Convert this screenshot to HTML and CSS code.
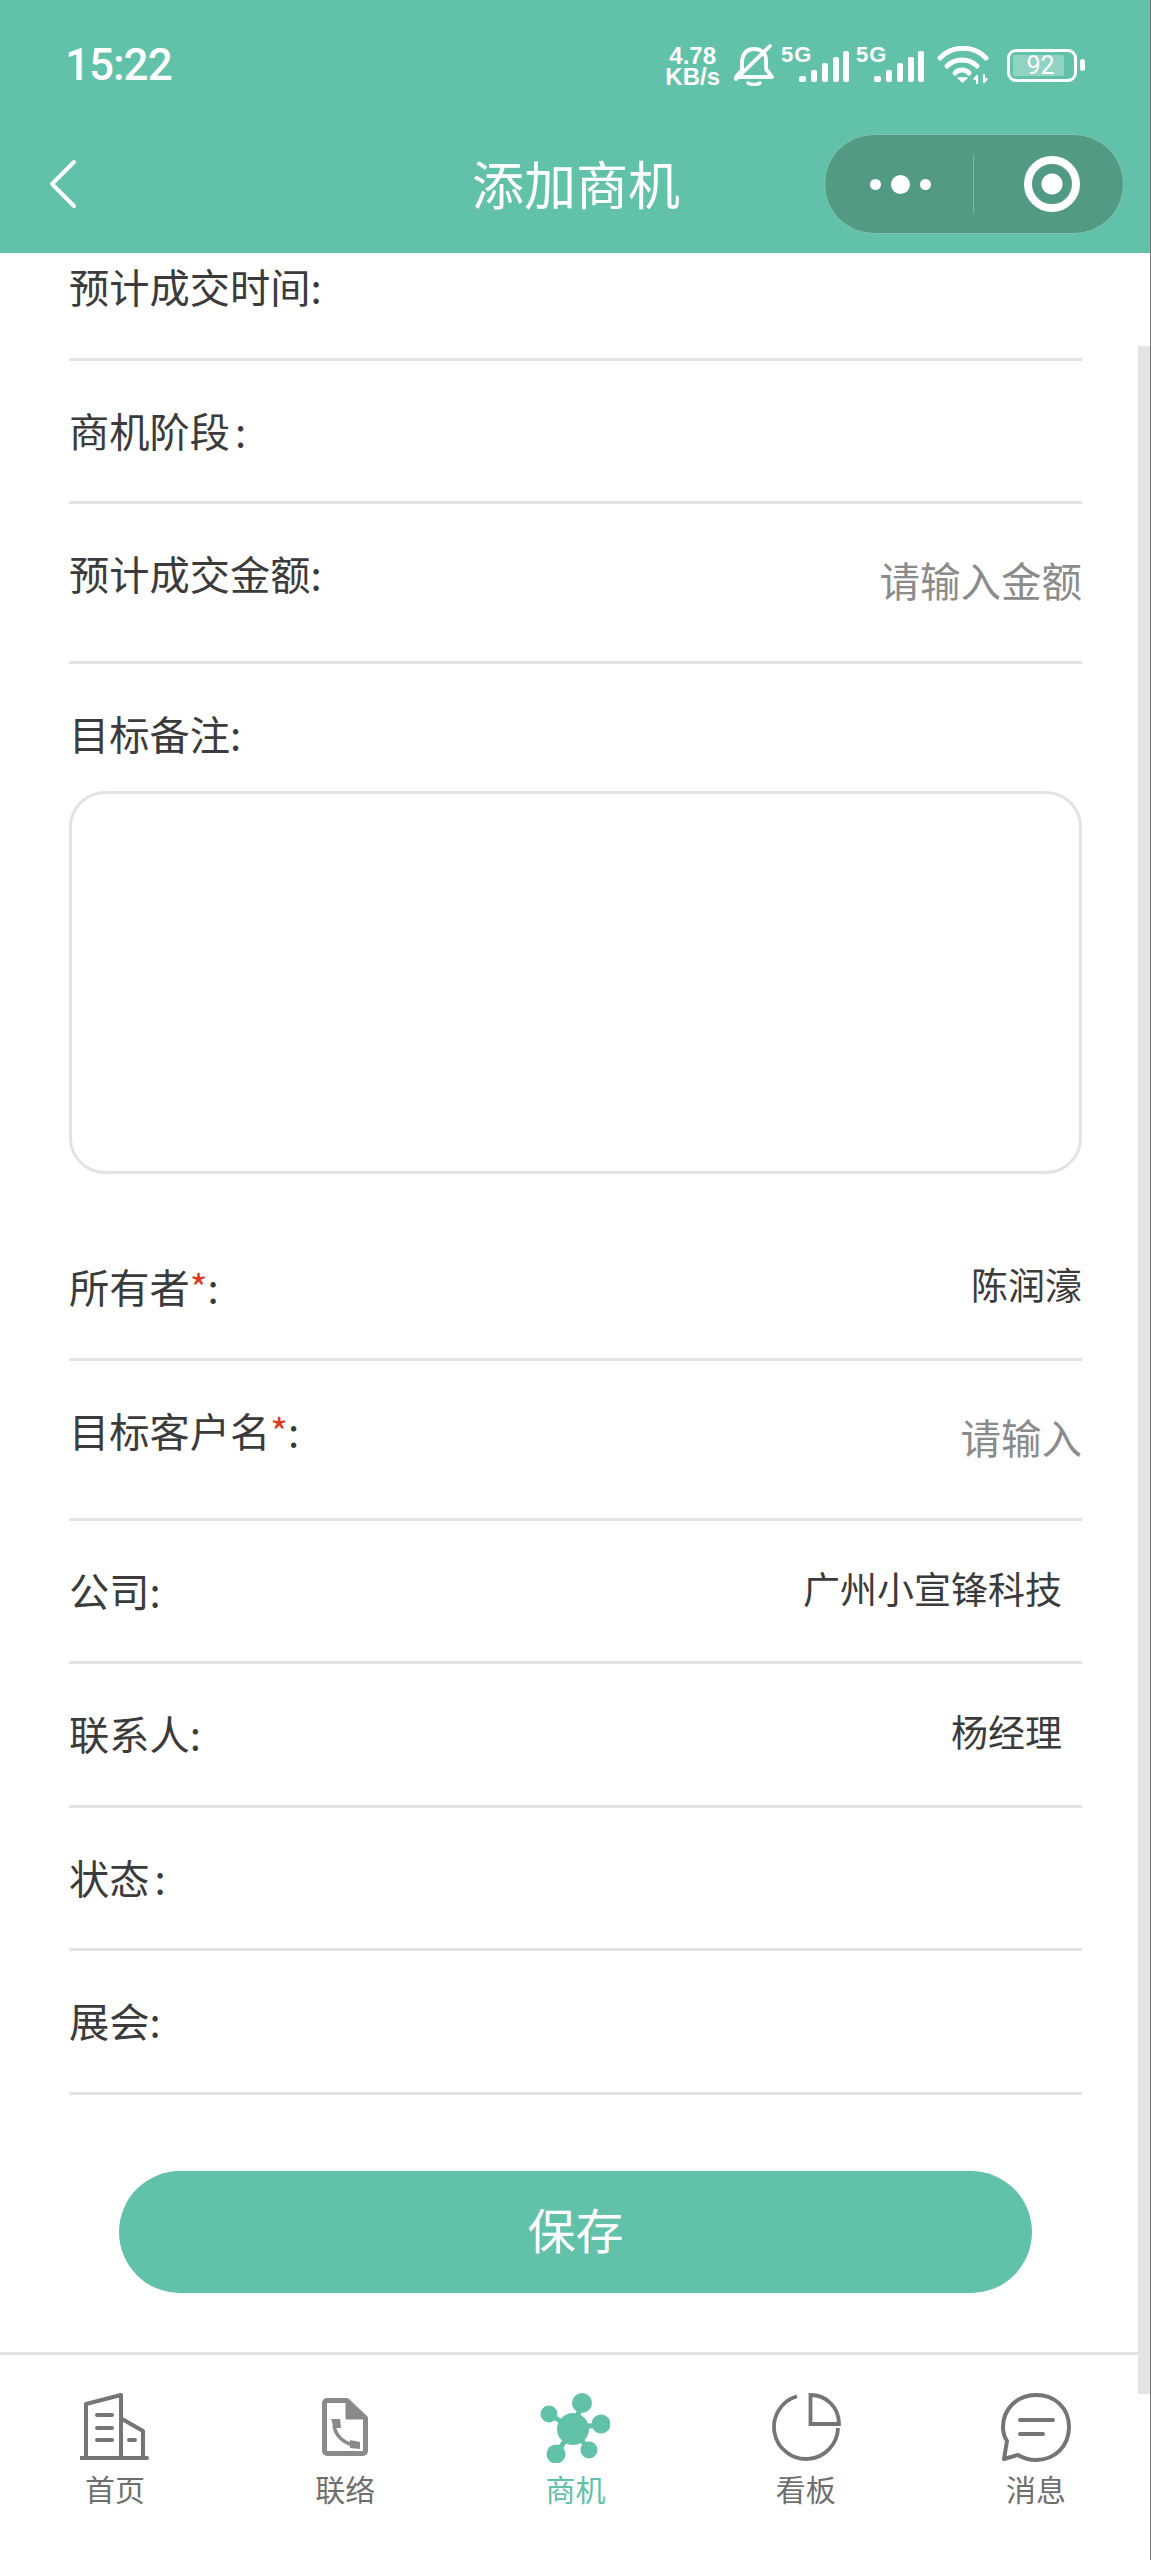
FILE: index.html
```html
<!DOCTYPE html>
<html lang="zh-CN">
<head>
  <meta charset="UTF-8" />
  <meta name="viewport" content="width=device-width, initial-scale=1.0" />
  <title>添加商机</title>
  <link rel="stylesheet" href="styles.css">
</head>
<body>
  <div class="page">
    <header class="top">
      <div class="status">
        <span class="time">15:22</span>
        <div class="status-icons">
          <span class="speed">4.78<br>KB/s</span>
          <svg class="bell" width="40" height="42" viewBox="0 0 40 42" fill="none" stroke="#fff" stroke-width="3.8" stroke-linecap="round" stroke-linejoin="round">
            <path d="M2 33h36l-6-8V16C32 9 27 5 20 5S9 9 8 17v9z"/>
            <path d="M14 39c3 2 9 2 12 0" stroke-width="3.4"/>
            <path d="M2 35 36 2"/>
          </svg>
          <div class="sig">
            <span class="five-g">5G</span>
            <svg width="68" height="37" viewBox="0 0 68 37" fill="#fff">
              <rect x="18" y="26" width="7" height="6" rx="2"/>
              <rect x="30" y="20" width="6" height="12" rx="2"/>
              <rect x="41" y="13" width="6" height="19" rx="2"/>
              <rect x="52" y="7" width="6" height="25" rx="2"/>
              <rect x="62" y="1" width="6" height="31" rx="2"/>
            </svg>
          </div>
          <div class="sig">
            <span class="five-g">5G</span>
            <svg width="68" height="37" viewBox="0 0 68 37" fill="#fff">
              <rect x="18" y="26" width="7" height="6" rx="2"/>
              <rect x="30" y="20" width="6" height="12" rx="2"/>
              <rect x="41" y="13" width="6" height="19" rx="2"/>
              <rect x="52" y="7" width="6" height="25" rx="2"/>
              <rect x="62" y="1" width="6" height="31" rx="2"/>
            </svg>
          </div>
          <svg class="wifi" width="52" height="38" viewBox="0 0 52 38" fill="none" stroke="#fff" stroke-width="5" stroke-linecap="round">
            <path d="M3 12C15 -1 37 -1 49 12"/>
            <path d="M10 20c8-8 22-8 30 0"/>
            <path d="M18 27c4-4 10-4 14 0" />
            <path d="M21 32h9l-4.500 4z" fill="#fff" stroke-width="1.500" stroke-linejoin="round"/>
            <path d="M40 30v7M37.500 33l2.500-3M47 29v7M47 36l2.500-3" stroke-width="2.200"/>
          </svg>
          <div class="battery">
            <div class="battery-body"><span class="battery-num">92</span></div>
            <span class="battery-nub"></span>
          </div>
        </div>
      </div>
      <nav class="nav">
        <svg class="back" width="28" height="50" viewBox="0 0 28 50" fill="none" stroke="#fff" stroke-width="4" stroke-linecap="round" stroke-linejoin="round">
          <path d="M25 3 3 25l22 22"/>
        </svg>
        <h1 class="title">添加商机</h1>
        <div class="capsule">
          <div class="cap-dots"><i class="dot"></i><i class="dot big"></i><i class="dot"></i></div>
          <span class="cap-line"></span>
          <div class="cap-target"><i class="target-core"></i></div>
        </div>
      </nav>
    </header>

    <main class="content">
      <div class="form">
        <div class="row"><span class="label">预计成交时间:</span></div>
        <div class="row"><span class="label">商机阶段 :</span></div>
        <div class="row tall"><span class="label">预计成交金额:</span><span class="hint">请输入金额</span></div>
        <div class="note">
          <span class="label">目标备注:</span>
          <div class="note-box"></div>
        </div>
        <div class="row"><span class="label">所有者<em class="req">*</em>:</span><span class="value">陈润濠</span></div>
        <div class="row tall"><span class="label">目标客户名<em class="req">*</em>:</span><span class="hint">请输入</span></div>
        <div class="row"><span class="label">公司:</span><span class="value arrow-gap">广州小宣锋科技</span></div>
        <div class="row"><span class="label">联系人:</span><span class="value arrow-gap">杨经理</span></div>
        <div class="row"><span class="label">状态 :</span></div>
        <div class="row"><span class="label">展会:</span></div>
        <button class="save">保存</button>
      </div>
    </main>

    <footer class="tabs">
      <div class="tab">
        <svg class="tab-icon" width="70" height="70" viewBox="0 0 70 70" fill="none" stroke="#757575" stroke-width="4" stroke-linecap="round" stroke-linejoin="round">
          <path d="M1 65h66"/>
          <path d="M6 65V11L41 2v63"/>
          <path d="M42 26 63 38v27"/>
          <path d="M17 22h15M17 35h15M17 47h15M49 47h6"/>
        </svg>
        <span>首页</span>
      </div>
      <div class="tab">
        <svg class="tab-icon" width="70" height="70" viewBox="0 0 70 70" fill="none">
          <path d="M17 7.500h20L55.500 25v33a2.500 2.500 0 0 1-2.500 2.500H17a2.500 2.500 0 0 1-2.500-2.500V10a2.500 2.500 0 0 1 2.500-2.500z" stroke="#8a8a8a" stroke-width="5" stroke-linejoin="round"/>
          <path d="M37 7.500V25h18.500z" fill="#8a8a8a" stroke="#8a8a8a" stroke-width="3" stroke-linejoin="round"/>
          <path d="M24 32c1 10 9 18 20 20" stroke="#8a8a8a" stroke-width="3.500"/>
          <path d="M21 26h9l1 9h-7zM40 47l10 2v7l-10-1z" fill="#8a8a8a"/>
        </svg>
        <span>联络</span>
      </div>
      <div class="tab active">
        <svg class="tab-icon" width="70" height="70" viewBox="0 0 70 70" fill="#62c1a9" stroke="#62c1a9" stroke-width="5">
          <path d="M33 36 42 10M33 36 9 21M33 36 61 31M33 36 49 57M33 36 16 61"/>
          <circle cx="33" cy="36" r="16" stroke="none"/>
          <circle cx="42" cy="10" r="10" stroke="none"/>
          <circle cx="9" cy="21" r="8.500" stroke="none"/>
          <circle cx="61" cy="31" r="9.500" stroke="none"/>
          <circle cx="49" cy="57" r="8.500" stroke="none"/>
          <circle cx="16" cy="61" r="9.500" stroke="none"/>
        </svg>
        <span>商机</span>
      </div>
      <div class="tab">
        <svg class="tab-icon" width="70" height="70" viewBox="0 0 70 70" fill="none" stroke="#757575" stroke-width="3.800">
          <path d="M26 3.300A32 32 0 1 0 67 35"/>
          <path d="M39.500 2v29H68C68 15 56 2 39.500 2z"/>
        </svg>
        <span>看板</span>
      </div>
      <div class="tab">
        <svg class="tab-icon" width="70" height="70" viewBox="0 0 70 70" fill="none" stroke="#757575" stroke-width="4" stroke-linecap="round" stroke-linejoin="round">
          <path d="M35 2C16 2 2 16 2 34c0 6 2 11 4 14L3 66l14-4c5 3 11 5 18 5 19 0 33-14 33-33S54 2 35 2z"/>
          <path d="M19 27h33M19 41h23"/>
        </svg>
        <span>消息</span>
      </div>
    </footer>
    <div class="scrollbar"></div>
    <div class="edge"></div>
  </div>
</body>
</html>
```

FILE: styles.css
```css
* {
  box-sizing: border-box;
}
html, body {
  margin: 0;
  padding: 0;
  background: #fff;
}
.page {
  position: relative;
  width: 1151px;
  height: 2560px;
  display: flex;
  flex-direction: column;
  overflow: hidden;
  font-family: "Noto Sans CJK SC", "Noto Sans", sans-serif;
  color: #3b3b3b;
}

/* header */
.top {
  height: 253px;
  background: #62c1a9;
  color: #fff;
  flex: none;
}
.status {
  height: 115px;
  padding: 15px 66px 0 65px;
  display: flex;
  align-items: center;
  justify-content: space-between;
}
.time {
  font-family: Roboto, sans-serif;
  font-size: 44px;
  font-weight: 500;
  letter-spacing: -1px;
}
.status-icons {
  display: flex;
  align-items: center;
}
.speed {
  font-family: "Liberation Sans", sans-serif;
  font-size: 24px;
  font-weight: 700;
  line-height: 21px;
  text-align: center;
  margin-top: 2px;
  margin-right: 14px;
}
.bell {
  margin-right: 7px;
}
.sig {
  position: relative;
  width: 68px;
  height: 38px;
  margin-right: 7px;
  margin-top: 8px;
}
.five-g {
  position: absolute;
  left: 0;
  top: -5px;
  font-family: "Liberation Sans", sans-serif;
  font-size: 22px;
  font-weight: 700;
  letter-spacing: 1px;
  line-height: 20px;
}
.wifi {
  margin-left: 6px;
  margin-right: 18px;
}
.battery {
  display: flex;
  align-items: center;
}
.battery-body {
  width: 70px;
  height: 33px;
  border: 3px solid #fff;
  border-radius: 9px;
  padding: 3px 10px 3px 3px;
  display: flex;
}
.battery-num {
  flex: 1;
  background: rgba(255, 255, 255, 0.3);
  border-radius: 2px;
  font-family: Roboto, sans-serif;
  font-size: 25px;
  line-height: 21px;
  text-align: center;
  padding-left: 4px;
}
.battery-nub {
  width: 5px;
  height: 12px;
  margin-left: 3px;
  background: #fff;
  border-radius: 3px;
}

.nav {
  height: 138px;
  padding: 0 27px 0 28px;
  display: grid;
  grid-template-columns: 1fr auto 1fr;
  align-items: center;
}
.back {
  margin-left: 21px;
}
.title {
  margin: 0 0 3px;
  font-size: 52px;
  font-weight: 400;
  line-height: 1;
}
.capsule {
  justify-self: end;
  width: 300px;
  height: 100px;
  background: #539a85;
  border: 1px solid #7fc4b1;
  border-radius: 50px;
  display: flex;
  align-items: center;
}
.cap-dots {
  width: 148px;
  display: flex;
  align-items: center;
  justify-content: center;
  gap: 10px;
  padding-left: 2px;
}
.dot {
  width: 11px;
  height: 11px;
  background: #fff;
  border-radius: 50%;
}
.dot.big {
  width: 19px;
  height: 19px;
}
.cap-line {
  width: 1px;
  height: 58px;
  background: #7fb9a8;
}
.cap-target {
  flex: 1;
  display: flex;
  align-items: center;
  justify-content: center;
  padding-left: 6px;
}
.target-core {
  width: 56px;
  height: 56px;
  border: 8px solid #fff;
  border-radius: 50%;
  background: radial-gradient(circle, #fff 0 10px, transparent 11px);
}

/* form */
.content {
  flex: 1;
  overflow: hidden;
}
.form {
  margin-top: -36px;
  padding: 0 69px;
}
.row {
  height: 143.500px;
  padding-top: 48px;
  border-bottom: 3px solid #e3e3e3;
  display: flex;
  justify-content: space-between;
  align-items: flex-start;
}
.row.tall {
  height: 160px;
}
.label {
  font-size: 40.250px;
  line-height: 42px;
  word-spacing: -4px;
  white-space: pre;
}
.req {
  color: #e03a24;
  font-style: normal;
  font-size: 38px;
}
.hint {
  font-size: 40.500px;
  line-height: 42px;
  color: #8b8b8b;
  margin-top: 7px;
}
.value {
  font-size: 37px;
  line-height: 42px;
  margin-top: -2px;
}
.arrow-gap {
  margin-right: 20px;
}
.note {
  padding-top: 48px;
  height: 553px;
}
.note-box {
  margin-top: 36px;
  height: 383px;
  border: 3px solid #e3e3e3;
  border-radius: 36px;
}
.save {
  display: block;
  width: 913px;
  height: 122px;
  margin: 76px 0 0 50px;
  padding: 0 0 8px;
  border: none;
  border-radius: 61px;
  background: #62c1a9;
  color: #fff;
  font-family: inherit;
  font-size: 48px;
}
.scrollbar {
  position: absolute;
  right: 1px;
  top: 346px;
  width: 12px;
  height: 2048px;
  background: #e3e3e3;
}
.edge {
  position: absolute;
  right: 0;
  top: 0;
  bottom: 0;
  width: 1px;
  background: #757575;
}

/* bottom tabs */
.tabs {
  flex: none;
  height: 208px;
  border-top: 3px solid #e3e3e3;
  padding-top: 38px;
  display: grid;
  grid-template-columns: repeat(5, 1fr);
}
.tab {
  display: flex;
  flex-direction: column;
  align-items: center;
  font-size: 30px;
  line-height: 34px;
  color: #6f6f6f;
}
.tab-icon {
  margin-bottom: 8px;
}
.tab.active {
  color: #62c1a9;
}
```
